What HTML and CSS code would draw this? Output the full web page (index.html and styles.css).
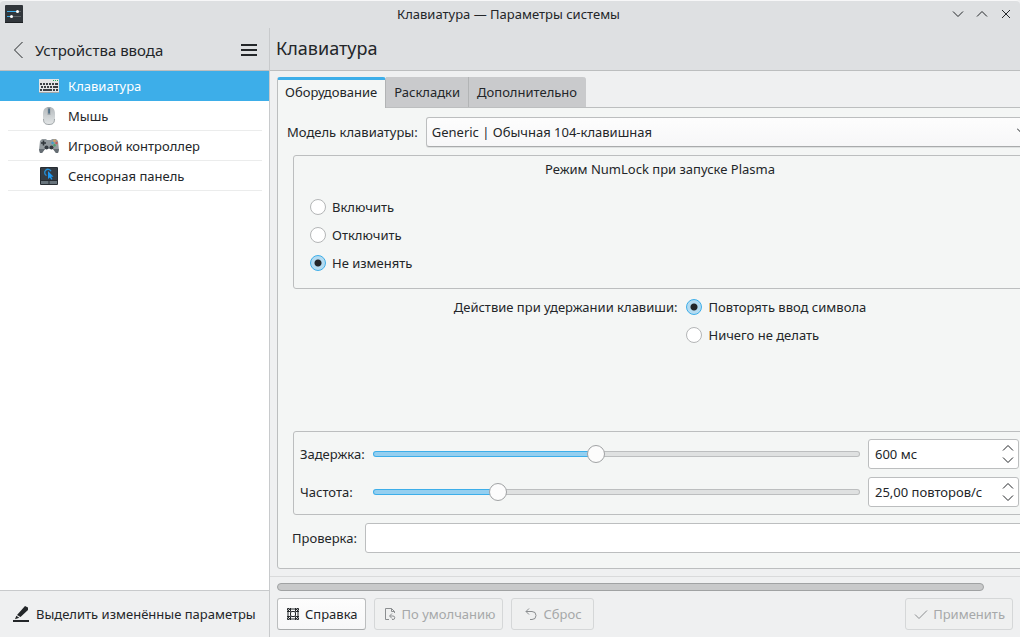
FILE: index.html
```html
<!DOCTYPE html>
<html lang="ru">
<head>
<meta charset="utf-8">
<title>Клавиатура — Параметры системы</title>
<link rel="stylesheet" href="styles.css">
</head>
<body>
<div class="window">
  <header class="titlebar">
    <svg class="app-icon" width="18" height="18" viewBox="0 0 18 18"><rect width="18" height="18" rx="1" fill="#31363b"/><path d="M0 17h18v1H0z" fill="#1d2023"/><path d="M2 6.500h10M2 11.500h4" stroke="#3daee9"/><path d="M13 6.500h3M7 11.500h9" stroke="#5d6367"/><circle cx="12.500" cy="6.500" r="1.500" fill="#fff"/><circle cx="6.500" cy="11.500" r="1.500" fill="#fff"/></svg>
    <h1 class="title">Клавиатура — Параметры системы</h1>
    <div class="window-buttons">
      <button class="icon-button" aria-label="Свернуть"><svg width="12" height="12" viewBox="0 0 12 12"><path d="M1 3.500l5 5 5-5"/></svg></button>
      <button class="icon-button" aria-label="Развернуть"><svg width="12" height="12" viewBox="0 0 12 12"><path d="M1 8.500l5-5 5 5"/></svg></button>
      <button class="icon-button" aria-label="Закрыть"><svg width="12" height="12" viewBox="0 0 12 12"><path d="M2 2l8 8M10 2l-8 8"/></svg></button>
    </div>
  </header>
  <div class="body">
    <aside class="sidebar">
      <div class="sidebar-head">
        <button class="icon-button" aria-label="Назад"><svg width="10" height="18" viewBox="0 0 10 18"><path d="M9.500 1L1.500 9l8 8"/></svg></button>
        <h2 class="sidebar-title">Устройства ввода</h2>
        <button class="icon-button" aria-label="Меню"><svg width="16" height="12" viewBox="0 0 16 12"><path d="M0 1h16M0 6h16M0 11h16" stroke-width="2"/></svg></button>
      </div>
      <nav class="nav">
        <a class="nav-item nav-item-active" href="#"><svg width="20" height="20" viewBox="0 0 20 20"><rect y="3" width="20" height="14" fill="#e3e5e6"/><path d="M0 16h20v1H0z" fill="#a3a8aa"/><path d="M14 4.500h1M16 4.500h1M18 4.500h1" stroke="#27ae60"/><path d="M1 8h15M2 11h14" stroke="#3b4045" stroke-width="2" stroke-dasharray="2 1"/><path d="M16 8h3M16 11h3" stroke="#3b4045" stroke-width="2"/><path d="M1 14h2M4 14h9M14 14h2M17 14h2" stroke="#3b4045" stroke-width="2"/></svg>Клавиатура</a>
        <a class="nav-item" href="#"><svg width="20" height="20" viewBox="0 0 20 20"><defs><linearGradient id="mouse" x2="0" y2="1"><stop stop-color="#b4b9bc"/><stop offset="1" stop-color="#e4e7e8"/></linearGradient></defs><path d="M4 8C4 3.500 6 1 10 1s6 2.500 6 7v5c0 4-2 6-6 6s-6-2-6-6z" fill="url(#mouse)"/><path d="M4.500 13c0 4 2 5.500 5.500 5.500s5.500-1.500 5.500-5.500" fill="none" stroke="#a0a5a8"/><path d="M8.500 1h3v8h-3z" fill="#a2a8ac"/><path d="M9.300 2.500h1.500v5H9.300z" fill="#3c6480"/></svg>Мышь</a>
        <a class="nav-item" href="#"><svg width="20" height="20" viewBox="0 0 20 20"><path d="M3 3h4l1 1h4l1-1h4l2 2 1 9-1 3h-2l-3-4H6l-3 4H1l-1-3 1-9z" fill="#939a9e"/><path d="M0 13l1 4h2l3-4zM20 13l-1 4h-2l-3-4z" fill="#656d73"/><path d="M4.500 4.500v5M2 7h5" stroke="#31363b" stroke-width="1.600"/><circle cx="7.500" cy="11.500" r="2" fill="#343a40"/><circle cx="12.500" cy="11.500" r="2" fill="#343a40"/><circle cx="15.500" cy="4.800" r="1.200" fill="#d9a35b"/><circle cx="13.500" cy="7" r="1.200" fill="#3d9ec9"/><circle cx="17.500" cy="7" r="1.200" fill="#c95a55"/><circle cx="15.500" cy="9.200" r="1.200" fill="#4aa470"/></svg>Игровой контроллер</a>
        <a class="nav-item" href="#"><svg width="20" height="20" viewBox="0 0 20 20"><rect x="1" y="1" width="18" height="18" rx="1" fill="#272d33"/><path d="M2 2h16v12H2z" fill="#353c43"/><path d="M2 15h7.500v3H2zM10.500 15H18v3h-7.500z" fill="#68747c"/><path d="M7.500 9.500a3.300 3.300 0 1 1 4.500-4.300" fill="none" stroke="#2492dc" stroke-width="1.300"/><path d="M9 5v8l1.800-1.600 1.700 2.400 1-.8-1.500-2.300h2.500z" fill="#1d99f3"/></svg>Сенсорная панель</a>
      </nav>
      <button class="highlight-button"><svg width="16" height="16" viewBox="0 0 16 16"><path class="solid" d="M0 14h16v2H0zM12 0l3 1.500L15 4 7.500 11 4 9zM3.300 9.800l3 2L2 13.300z"/></svg>Выделить изменённые параметры</button>
    </aside>
    <main class="main">
      <h2 class="page-title">Клавиатура</h2>
      <div class="viewport">
        <div class="page">
          <div class="tabs" role="tablist">
            <button class="tab tab-active" role="tab" aria-selected="true">Оборудование</button>
            <button class="tab" role="tab">Раскладки</button>
            <button class="tab" role="tab">Дополнительно</button>
          </div>
          <form class="panel">
            <div class="field-row">
              <label for="model">Модель клавиатуры:</label>
              <div class="select-box">
                <select id="model"><option>Generic | Обычная 104-клавишная</option></select>
                <svg class="select-arrow" width="10" height="10" viewBox="0 0 10 10"><path d="M0 2.500l5 5 5-5"/></svg>
              </div>
            </div>
            <fieldset class="group numlock">
              <legend class="group-title">Режим NumLock при запуске Plasma</legend>
              <label class="radio"><input type="radio" name="numlock">Включить</label>
              <label class="radio"><input type="radio" name="numlock">Отключить</label>
              <label class="radio"><input type="radio" name="numlock" checked>Не изменять</label>
            </fieldset>
            <div class="hold" role="radiogroup" aria-labelledby="hold-label">
              <span class="hold-label" id="hold-label">Действие при удержании клавиши:</span>
              <div>
                <label class="radio"><input type="radio" name="hold" checked>Повторять ввод символа</label>
                <label class="radio"><input type="radio" name="hold">Ничего не делать</label>
              </div>
            </div>
            <div class="group repeat">
              <label for="delay">Задержка:</label>
              <input class="slider" id="delay" type="range" max="1000" value="457" style="--fill: 46%">
              <div class="spin">
                <input type="text" value="600 мс" aria-label="Значение задержки">
                <div class="spin-buttons">
                  <button type="button" class="icon-button" aria-label="Увеличить задержку"><svg width="12" height="8" viewBox="0 0 12 8"><path d="M1 6.500l5-5 5 5"/></svg></button>
                  <button type="button" class="icon-button" aria-label="Уменьшить задержку"><svg width="12" height="8" viewBox="0 0 12 8"><path d="M1 1.500l5 5 5-5"/></svg></button>
                </div>
              </div>
              <label for="rate">Частота:</label>
              <input class="slider" id="rate" type="range" max="1000" value="247" style="--fill: 26%">
              <div class="spin">
                <input type="text" value="25,00 повторов/с" aria-label="Значение частоты">
                <div class="spin-buttons">
                  <button type="button" class="icon-button" aria-label="Увеличить частоту"><svg width="12" height="8" viewBox="0 0 12 8"><path d="M1 6.500l5-5 5 5"/></svg></button>
                  <button type="button" class="icon-button" aria-label="Уменьшить частоту"><svg width="12" height="8" viewBox="0 0 12 8"><path d="M1 1.500l5 5 5-5"/></svg></button>
                </div>
              </div>
            </div>
            <div class="field-row test-row">
              <label for="test">Проверка:</label>
              <input class="text-input" id="test" type="text">
            </div>
          </form>
        </div>
      </div>
      <footer class="footer">
        <div class="scrollbar"><div class="scroll-thumb" style="width: 96%"></div></div>
        <div class="actions">
          <button class="button"><svg width="14" height="14" viewBox="0 0 14 14"><rect x="2" y="2" width="10" height="10" rx="3"/><rect x="4.500" y="4.500" width="5" height="5" rx="1.500"/><path d="M4.500 1v3.500M9.500 1v3.500M4.500 9.500V13M9.500 9.500V13M1 4.500h3.500M1 9.500h3.500M9.500 4.500H13M9.500 9.500H13"/><path d="M1.500 1.500h2M1.500 1.500v2M12.500 1.500h-2M12.500 1.500v2M1.500 12.500h2M1.500 12.500v-2M12.500 12.500h-2M12.500 12.500v-2"/></svg>Справка</button>
          <button class="button" disabled><svg class="strong" width="14" height="14" viewBox="0 0 14 14"><path d="M6 12.500H2.500v-11h6l3 3V6M8.500 1.500v3h3M7 9h3a1.700 1.700 0 0 1 0 3.500H9M9 6.500L6.500 9 9 11.500"/></svg>По умолчанию</button>
          <button class="button button-reset" disabled><svg class="strong" width="14" height="14" viewBox="0 0 14 14"><path d="M5 1.500L2 4.500l3 3M2 4.500h6a4 4 0 0 1 0 8H6"/></svg>Сброс</button>
          <button class="button button-apply" disabled><svg class="strong" width="14" height="14" viewBox="0 0 14 14"><path d="M1 7.500l4 4 8-8"/></svg>Применить</button>
        </div>
      </footer>
    </main>
  </div>
</div>
</body>
</html>
```

FILE: styles.css
```css
* {
  box-sizing: border-box;
}

body {
  margin: 0;
  background: #eff0f1;
  color: #232629;
  font: 13px/18px "Noto Sans", sans-serif;
}

button,
input,
select {
  margin: 0;
  color: inherit;
  font: inherit;
}

svg {
  display: block;
  flex: none;
  fill: none;
  stroke: none;
}

.icon-button svg,
.button svg,
.select-arrow {
  stroke: currentColor;
}

.button .strong {
  color: #8b8e90;
}

.solid {
  fill: currentColor;
}

.icon-button {
  display: flex;
  padding: 0;
  border: 0;
  background: none;
}

.window {
  display: flex;
  flex-direction: column;
  height: 100vh;
  overflow: hidden;
}

.titlebar {
  display: grid;
  grid-template-columns: 1fr auto 1fr;
  align-items: center;
  height: 28px;
  padding: 0 8px 1px 5px;
  border-top: 1px solid #f7f7f8;
  border-radius: 4px 4px 0 0;
  background: #dee0e2;
}

.title {
  margin: 0;
  font-size: 13px;
  font-weight: 400;
}

.window-buttons {
  display: flex;
  justify-content: flex-end;
  gap: 12px;
}

.body {
  display: flex;
  flex: 1;
  min-height: 0;
}

.sidebar {
  display: flex;
  flex: none;
  flex-direction: column;
  width: 270px;
  border-right: 1px solid #c8cacc;
  background: #fff;
}

.sidebar-head {
  display: flex;
  align-items: center;
  gap: 12px;
  height: 43px;
  padding: 2px 12px 0 13px;
  border-bottom: 1px solid #bcbebf;
  background: #dee0e2;
}

.sidebar-title {
  flex: 1;
  margin: 0;
  font-size: 15px;
  font-weight: 400;
}

.nav {
  flex: 1;
}

.nav-item {
  display: flex;
  align-items: center;
  gap: 9px;
  height: 30px;
  margin: 0 7px 0 8px;
  padding-left: 31px;
  border-bottom: 1px solid #ebecec;
  color: inherit;
  text-decoration: none;
}

.nav-item-active {
  margin: 0;
  padding-left: 39px;
  border-color: #3daee9;
  background: #3daee9;
  color: #fff;
}

.highlight-button {
  display: flex;
  align-items: center;
  gap: 7px;
  height: 47px;
  padding: 0 0 0 13px;
  border: 0;
  border-top: 1px solid #c8cacc;
  background: #eff0f1;
  white-space: nowrap;
}

.main {
  display: flex;
  flex: 1;
  flex-direction: column;
  min-width: 0;
}

.page-title {
  height: 43px;
  margin: 0;
  padding-left: 6px;
  border-bottom: 1px solid #bcbebf;
  background: #dee0e2;
  font-size: 18px;
  font-weight: 400;
  line-height: 40px;
}

.viewport {
  display: flex;
  flex: 1;
  min-height: 0;
  padding: 6px 0 7px 7px;
  overflow: hidden;
}

.page {
  display: flex;
  flex: none;
  flex-direction: column;
  width: calc(100% + 14px);
}

.tabs {
  display: flex;
}

.tab {
  height: 30px;
  padding: 0 8px;
  border: 0;
  border-right: 1px solid #b2b4b5;
  background: #c9cacc;
}

.tab:last-child {
  border-right-color: #c9cacc;
  border-radius: 0 3px 0 0;
}

.tab-active {
  position: relative;
  height: 31px;
  margin-bottom: -1px;
  padding: 0 8px 4px 7px;
  border-left: 1px solid #bcbebf;
  border-top: 3px solid #3daee9;
  border-radius: 3px 3px 0 0;
  background: #f4f6f5;
}

.panel {
  display: flex;
  flex: 1;
  flex-direction: column;
  padding: 9px 6px 15px 9px;
  border: 1px solid #bcbebf;
  border-radius: 0 3px 3px 3px;
  background: #f4f6f5;
}

.field-row {
  display: flex;
  align-items: center;
  gap: 8px;
}

.select-box {
  position: relative;
  flex: 1;
}

.select-box select {
  display: block;
  width: 100%;
  height: 30px;
  padding: 0 24px 0 5px;
  border: 1px solid #bcbebf;
  border-bottom-color: #a9abac;
  border-radius: 3px;
  appearance: none;
  background: linear-gradient(#fdfdfd, #f7f7f8);
  box-shadow: 0 1px 0 #dfe1e1;
}

.select-arrow {
  position: absolute;
  top: 9px;
  right: 0;
}

.group {
  margin: 8px 0 0 6px;
  border: 1px solid #bcbebf;
  border-radius: 3px;
}

.numlock {
  min-width: 0;
  padding: 4px 16px 11px;
}

.group-title {
  float: left;
  width: 100%;
  margin-bottom: 15px;
  padding: 0;
  text-align: center;
}

.radio {
  display: flex;
  clear: both;
  align-items: center;
  gap: 6px;
  height: 28px;
}

.radio input {
  width: 16px;
  height: 16px;
  border: 1px solid #b4b6b7;
  border-radius: 50%;
  appearance: none;
  background: #fff;
}

.radio input:checked {
  border-color: #3daee9;
  background: radial-gradient(circle, #232629 3px, #b3dbf1 4px);
}

.hold {
  display: flex;
  flex: 1;
  gap: 9px;
  justify-content: center;
  padding: 4px 0 0 6px;
}

.hold-label {
  line-height: 28px;
}

.repeat {
  display: grid;
  grid-template-columns: auto 1fr 151px;
  align-items: center;
  gap: 8px;
  padding: 7px 7px 7px 6px;
}

.slider {
  width: 100%;
  height: 18px;
  appearance: none;
  background: none;
}

.slider::-webkit-slider-runnable-track {
  height: 6px;
  border: 1px solid transparent;
  border-radius: 3px;
  background:
    linear-gradient(90deg, #94cff0 var(--fill), #dfe1e1 var(--fill)) padding-box,
    linear-gradient(90deg, #3daee9 var(--fill), #bcbebf var(--fill)) border-box;
}

.slider::-webkit-slider-thumb {
  width: 18px;
  height: 18px;
  margin-top: -7px;
  border: 1px solid #a0a2a4;
  border-radius: 50%;
  appearance: none;
  background: #fcfcfc;
}

.spin,
.text-input {
  height: 30px;
  border: 1px solid #bcbebf;
  border-radius: 3px;
  background: #fff;
}

.spin {
  display: flex;
  align-items: center;
  padding: 0 4px 0 6px;
}

.spin input {
  flex: 1;
  min-width: 0;
  padding: 0;
  border: 0;
  background: none;
}

.spin-buttons {
  display: grid;
  gap: 4px;
}

.test-row {
  margin-top: 8px;
  padding-left: 5px;
}

.text-input {
  flex: 1;
}

.footer {
  padding: 6px 7px 7px;
  border-top: 1px solid #d9dadb;
}

.scroll-thumb {
  height: 8px;
  border: 1px solid #a0a2a3;
  border-radius: 4px;
  background: #c8c9ca;
}

.actions {
  display: flex;
  gap: 8px;
  margin-top: 7px;
}

.button {
  display: flex;
  align-items: center;
  gap: 5px;
  height: 32px;
  padding: 0 7px 0 8px;
  border: 1px solid #bcbebf;
  border-bottom-color: #a9abac;
  border-radius: 3px;
  background: linear-gradient(#fdfdfd, #f7f7f8);
}

.button:disabled {
  border-color: #d5d7d8;
  background: #eff0f0;
  color: #a6a8a9;
}

.button-reset {
  padding: 0 11px 0 12px;
}

.button-apply {
  margin-left: auto;
}
```
